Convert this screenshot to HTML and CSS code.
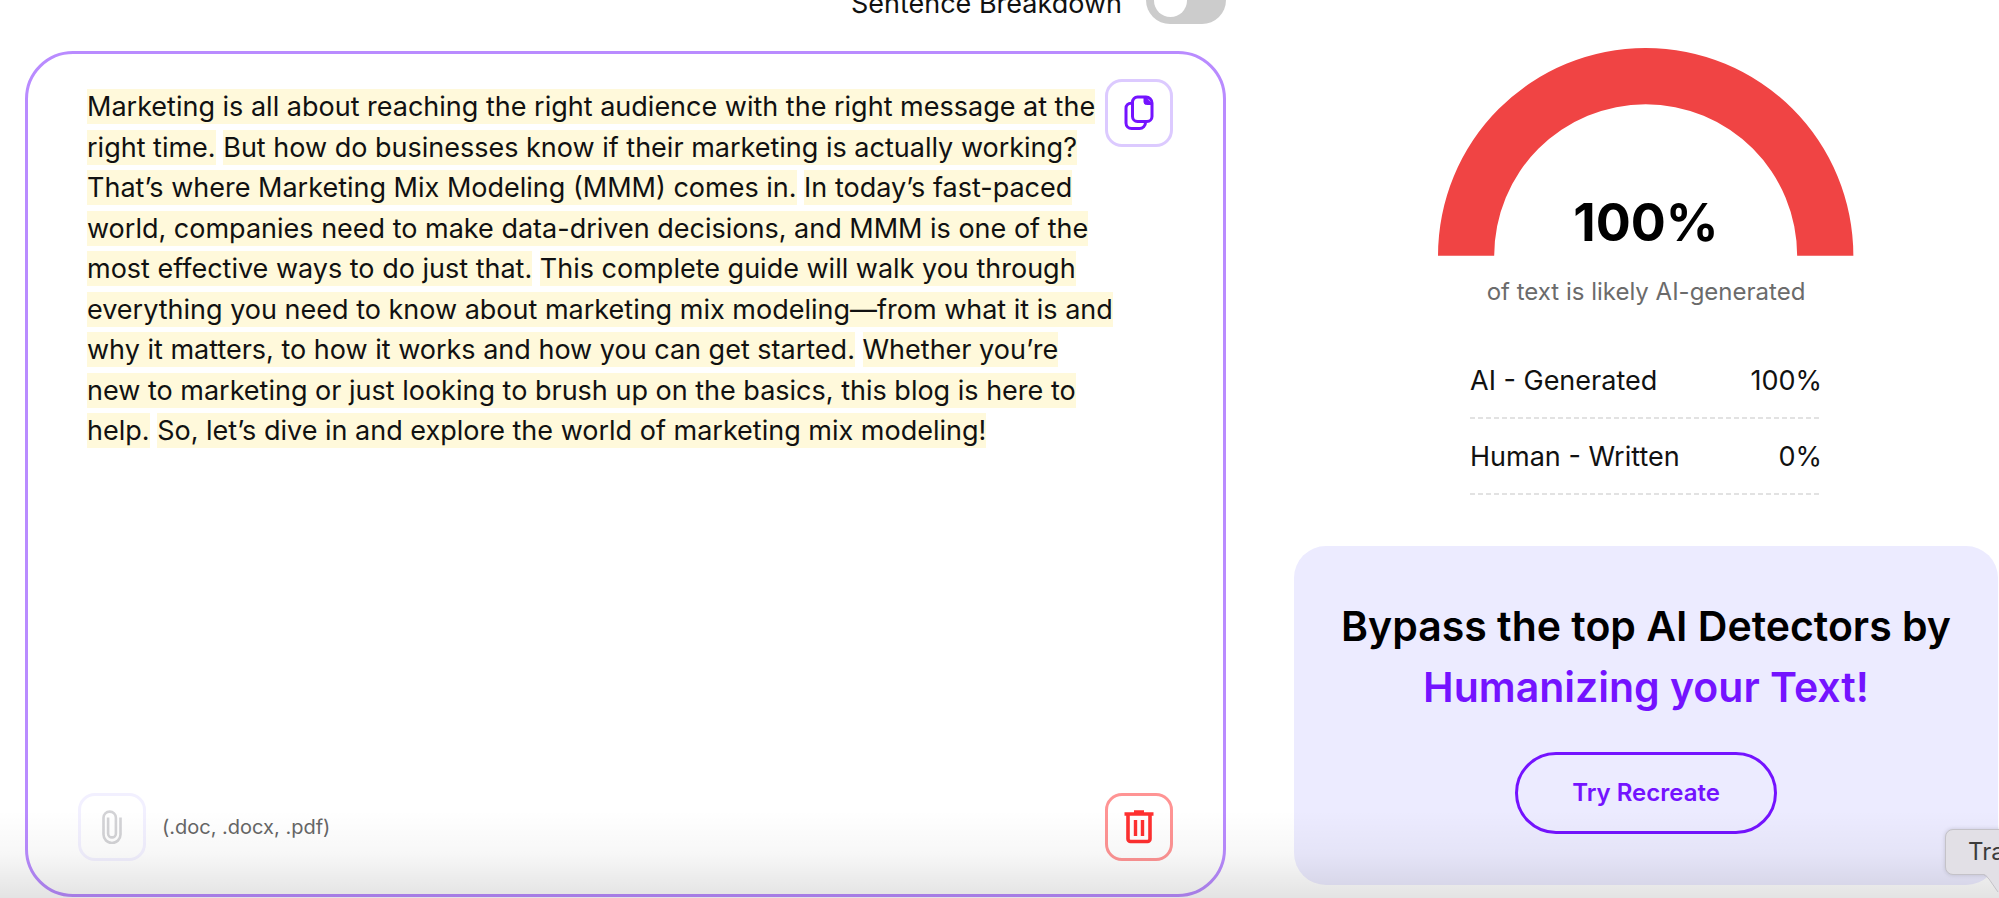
FILE: index.html
```html
<!DOCTYPE html>
<html lang="en">
<head>
<meta charset="utf-8">
<title>AI Detector</title>
<link rel="stylesheet" href="styles.css">
</head>
<body>
<main class="page">
  <section class="detector">
    <div class="toolbar">
      <label class="toolbar-label" for="breakdown">Sentence Breakdown</label>
      <input class="switch" type="checkbox" role="switch" id="breakdown">
    </div>
    <div class="editor">
      <p class="editor-text"><mark>Marketing is all about reaching the right audience with the right message at the<br>right time.</mark> <mark>But how do businesses know if their marketing is actually working?</mark><br><mark>That’s where Marketing Mix Modeling (MMM) comes in.</mark> <mark>In today’s fast-paced<br>world, companies need to make data-driven decisions, and MMM is one of the<br>most effective ways to do just that.</mark> <mark>This complete guide will walk you through<br>everything you need to know about marketing mix modeling—from what it is and<br>why it matters, to how it works and how you can get started.</mark> <mark>Whether you’re<br>new to marketing or just looking to brush up on the basics, this blog is here to<br>help.</mark> <mark>So, let’s dive in and explore the world of marketing mix modeling!</mark></p>
      <button class="icon-button copy" type="button" aria-label="Copy text">
        <svg width="30" height="36" viewBox="0 0 30 36" fill="none" stroke="currentColor" stroke-width="3">
          <path d="M8.5 8.2H7A5 5 0 0 0 2 13.2V28A5.5 5.5 0 0 0 7.5 33.5H15.5A6 6 0 0 0 21.5 27.5"/>
          <path d="M20.5 2H13.5A5 5 0 0 0 8.5 7V21.5A5 5 0 0 0 13.5 26.5H23A5 5 0 0 0 28 21.5V8A6 6 0 0 0 22 2Z"/>
          <path d="M20 2V7A2.5 2.5 0 0 0 22.5 9.5H28L22 2Z" fill="currentColor" stroke-width="1"/>
        </svg>
      </button>
      <div class="editor-footer">
        <button class="icon-button attach" type="button" aria-label="Attach a file">
          <svg width="20" height="34" viewBox="0 0 20 34" fill="none" stroke="currentColor" stroke-width="2.6">
            <path d="M18.500 7.500V24.500A8.500 8.500 0 0 1 1.500 24.500V7.800A6.200 6.200 0 0 1 13.900 7.800V23.500A3.900 3.900 0 0 1 6.100 23.500V7.500"/>
          </svg>
        </button>
        <span class="formats">(.doc, .docx, .pdf)</span>
        <button class="icon-button delete" type="button" aria-label="Delete text">
          <svg width="30" height="34" viewBox="0 0 30 34" fill="none" stroke="currentColor">
            <path d="M10 2H20M0.5 4H29.5" stroke-width="3.6"/>
            <path d="M4 5V29A2.5 2.5 0 0 0 6.5 31.5H23.5A2.5 2.5 0 0 0 26 29V5" stroke-width="3.6"/>
            <path d="M11.5 10V26M18.5 10V26" stroke-width="3.4"/>
          </svg>
        </button>
      </div>
    </div>
  </section>
  <aside class="results">
    <div class="gauge">
      <svg class="gauge-arc" viewBox="0 0 414 207" aria-hidden="true">
        <path d="M0 207A207 207 0 0 1 414 207H358A151 151 0 0 0 56 207Z" fill="#f04444"/>
      </svg>
      <strong class="gauge-value">100%</strong>
    </div>
    <p class="gauge-caption">of text is likely AI-generated</p>
    <dl class="scores">
      <div class="score"><dt>AI - Generated</dt><dd>100%</dd></div>
      <div class="score"><dt>Human - Written</dt><dd>0%</dd></div>
    </dl>
    <section class="promo">
      <h2 class="promo-title">Bypass the top AI Detectors by <span class="accent">Humanizing your Text!</span></h2>
      <button class="promo-button" type="button">Try Recreate</button>
    </section>
  </aside>
  <div class="fade"></div>
  <div class="tooltip">Tra
    <svg class="tooltip-tail" width="40" height="20" viewBox="0 0 40 20"><path d="M0 0Q3 1 5 4L14 18Q16 20 18 18L34 0Z" fill="#e2e0e6"/><path d="M0 1Q3 2 5 5L14 18" fill="none" stroke="#c4c2c8"/></svg>
  </div>
</main>
</body>
</html>
```

FILE: styles.css
```css
* {
  box-sizing: border-box;
}

body {
  margin: 0;
  background: #fff;
  color: #111;
  font: 27px/41px Inter, "Liberation Sans", sans-serif;
  overflow: hidden;
}

button {
  font: inherit;
  background: none;
  cursor: pointer;
}

.page {
  position: relative;
  display: grid;
  grid-template-columns: minmax(0, 1201fr) minmax(0, 704fr);
  gap: 68px;
  height: 100vh;
  padding: 0 1px 1px 25px;
  overflow: hidden;
}

.detector {
  display: flex;
  flex-direction: column;
  gap: 27px;
  margin-top: -24px;
}

.toolbar {
  display: flex;
  justify-content: flex-end;
  align-items: center;
  gap: 24px;
}

.toolbar-label {
  padding-top: 6px;
}

.switch {
  appearance: none;
  display: flex;
  align-items: center;
  width: 80px;
  height: 48px;
  margin: 0;
  padding: 8px;
  border-radius: 24px;
  background: #ccc;
}

.switch::before {
  content: "";
  width: 33px;
  height: 33px;
  border-radius: 50%;
  background: #fff;
}

.editor {
  position: relative;
  display: flex;
  flex: 1;
  flex-direction: column;
  justify-content: space-between;
  padding: 33px 50px;
  border: 3px solid #b98bff;
  border-radius: 48px;
}

.editor-text {
  margin: 0;
  padding: 0 9px;
  line-height: 1.5;
  white-space: nowrap;
}

mark {
  padding: 1px 0;
  background: #fff9db;
  color: inherit;
}

.icon-button {
  display: grid;
  place-items: center;
  width: 68px;
  height: 68px;
  padding: 0;
  border: 3px solid;
  border-radius: 17px;
}

.copy {
  position: absolute;
  top: 25px;
  right: 50px;
  border-color: #dccaff;
  color: #7413ff;
}

.attach {
  border-color: #f2f0ff;
  color: #d3d3d6;
}

.delete {
  margin-left: auto;
  border-color: #ff9494;
  color: #ff3030;
}

.editor-footer {
  display: flex;
  align-items: center;
  gap: 16px;
}

.formats {
  color: #666;
  font-size: 20px;
}

.results {
  display: flex;
  flex-direction: column;
  align-items: center;
  padding-top: 48px;
}

.gauge {
  display: grid;
  justify-items: center;
  align-items: end;
  width: 59%;
}

.gauge-arc,
.gauge-value {
  grid-area: 1 / 1;
}

.gauge-arc {
  width: 100%;
}

.gauge-value {
  color: #000;
  font-size: 52px;
  font-weight: 700;
  line-height: 66px;
}

.gauge-caption {
  margin: 15px 0 31px;
  color: #6b6b6b;
  font-size: 24px;
}

.scores {
  width: 50%;
  margin: 0 0 51px;
}

.score {
  display: flex;
  justify-content: space-between;
  align-items: center;
  height: 76px;
  background: repeating-linear-gradient(90deg, #e2e2e2 0 5px, transparent 5px 8px) bottom / 100% 2px no-repeat;
}

.score dd {
  margin: 0;
}

.promo {
  display: flex;
  flex-direction: column;
  align-items: center;
  gap: 34px;
  width: 100%;
  padding: 50px 16px 51px;
  border-radius: 32px;
  background: #ecebff;
}

.promo-title {
  margin: 0;
  color: #000;
  font-size: 41px;
  font-weight: 600;
  line-height: 61px;
  text-align: center;
}

.accent {
  display: block;
  color: #7413ff;
}

.promo-button {
  height: 82px;
  padding: 0 54px;
  border: 3px solid #7413ff;
  border-radius: 41px;
  color: #7413ff;
  font-size: 24px;
  font-weight: 600;
}

.fade {
  position: absolute;
  inset: auto 0 0;
  height: 88px;
  background: linear-gradient(transparent, rgba(0, 0, 0, 0.03) 50%, rgba(0, 0, 0, 0.11));
  pointer-events: none;
}

.tooltip {
  position: absolute;
  left: calc(100% - 54px);
  bottom: 23px;
  padding: 1px 22px 2px;
  border: 1px solid #c4c2c8;
  border-radius: 8px;
  background: #e2e0e6;
  box-shadow: 0 0 4px rgba(0, 0, 0, 0.15);
  color: #3c3c3c;
  font-size: 24px;
}

.tooltip-tail {
  position: absolute;
  top: 100%;
  left: 38px;
}
```
